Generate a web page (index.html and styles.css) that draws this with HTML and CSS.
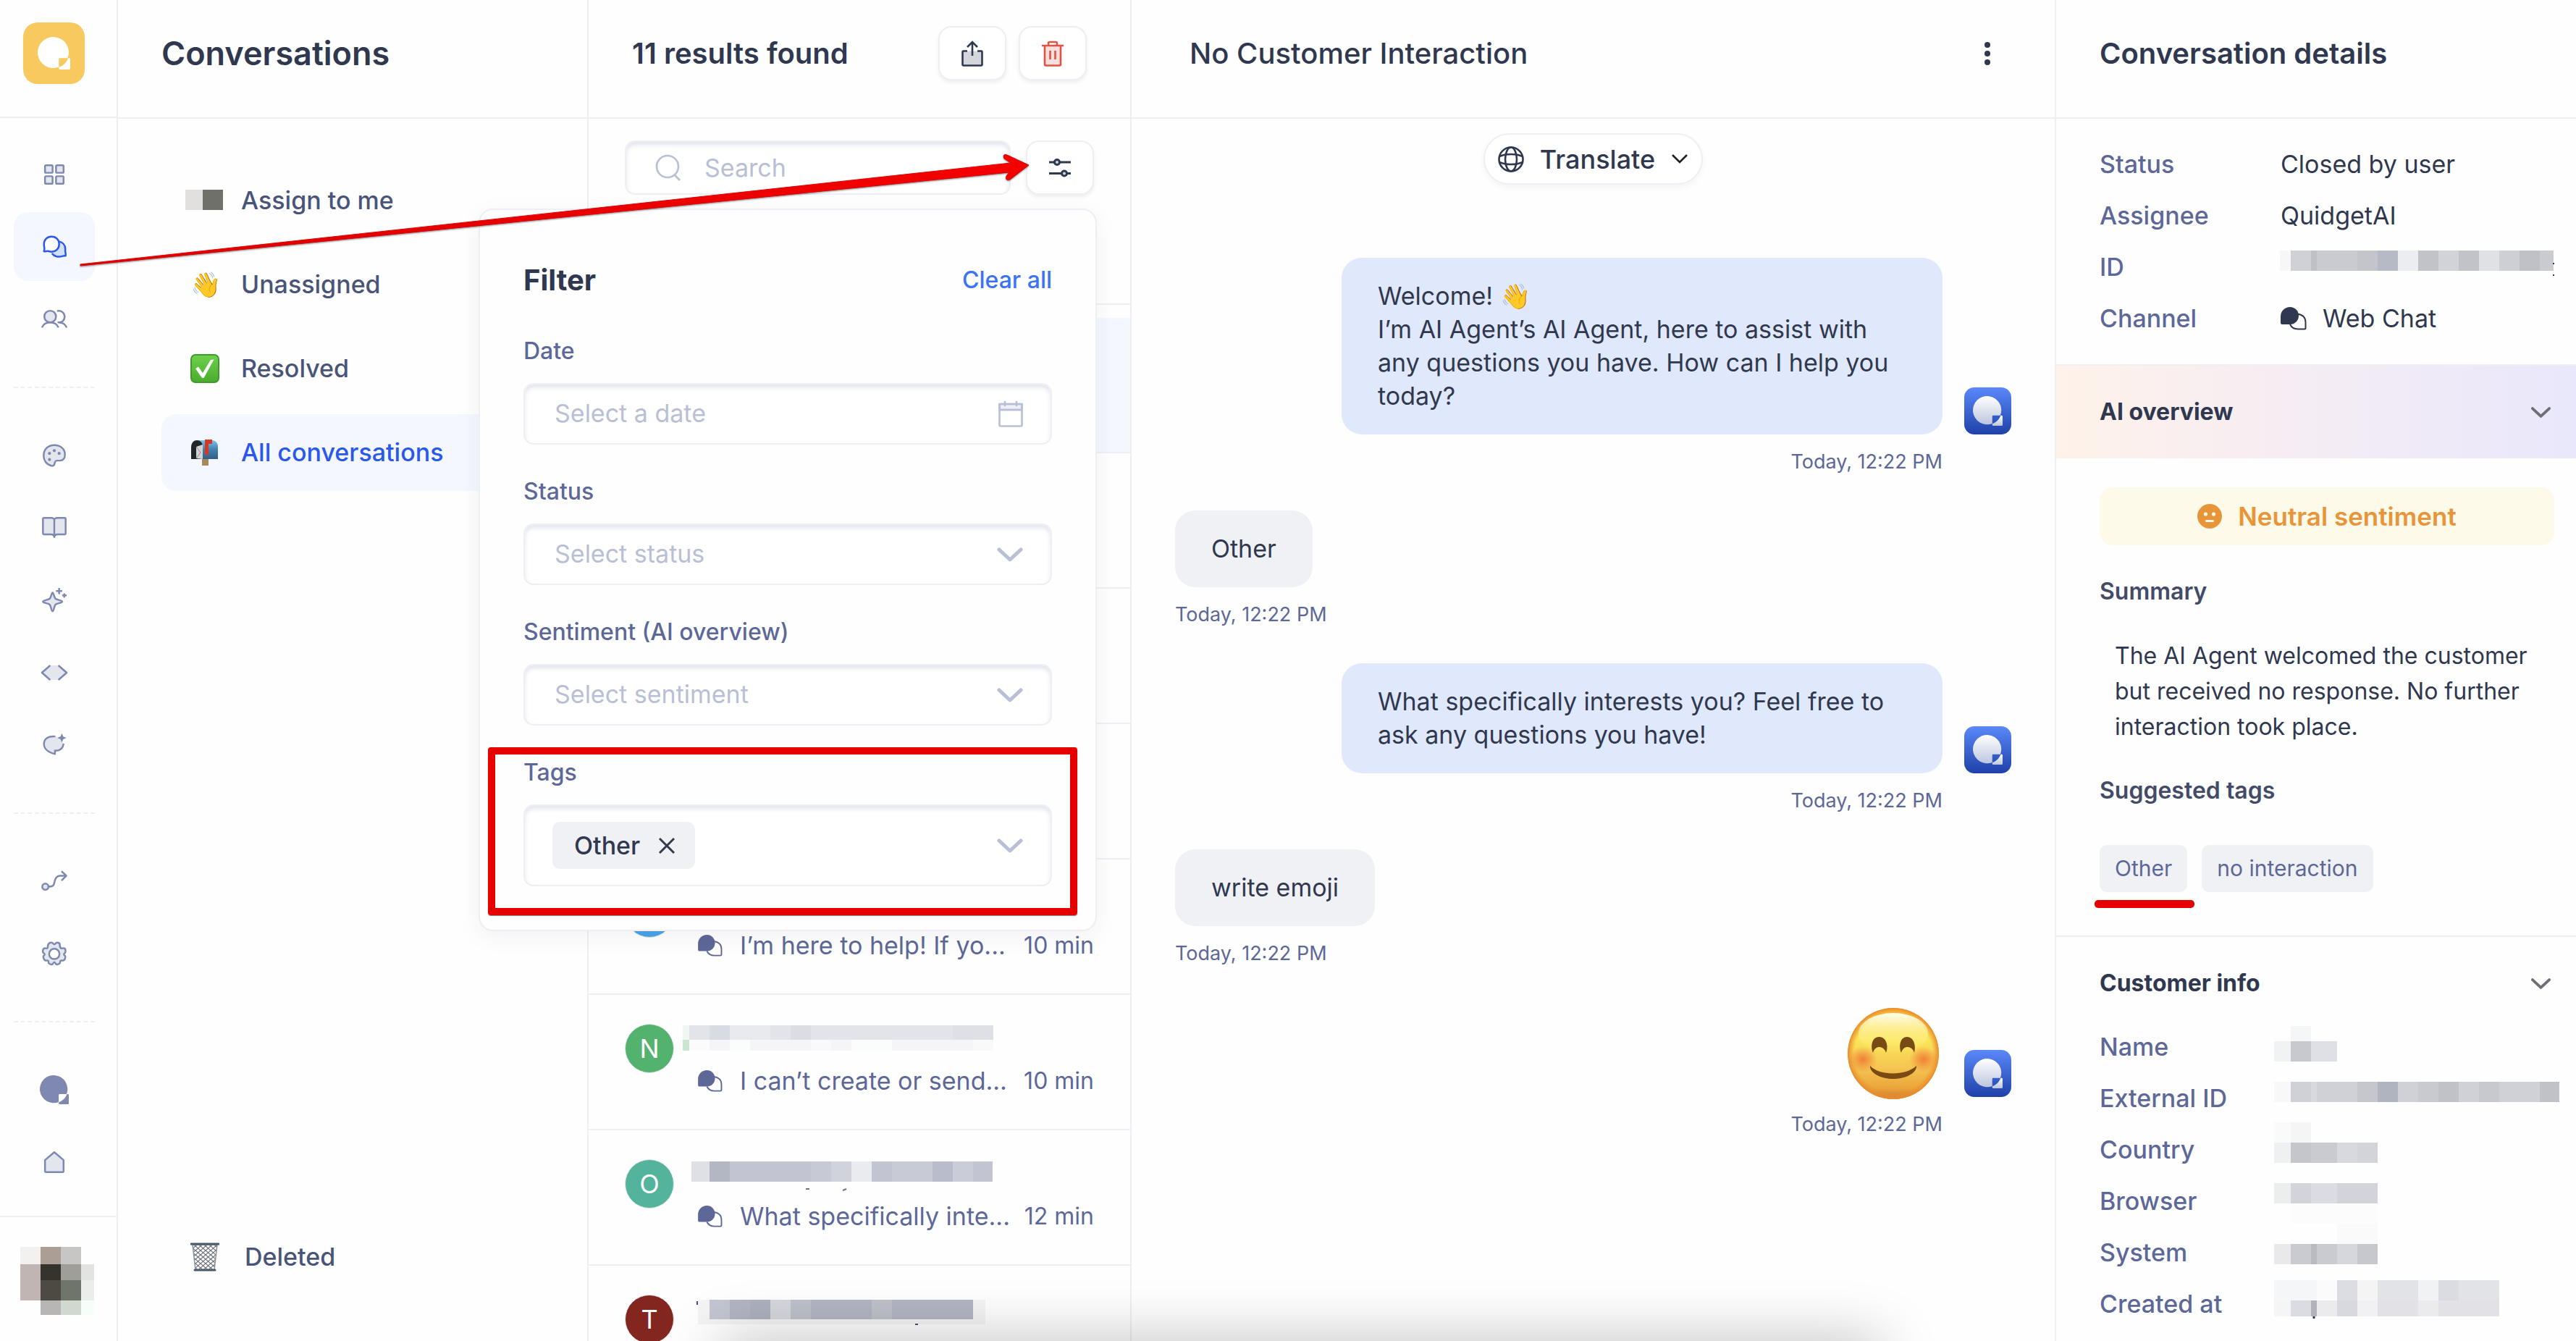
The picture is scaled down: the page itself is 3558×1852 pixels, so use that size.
FILE: index.html
```
<!DOCTYPE html>
<html lang="en">
<head>
  <meta charset="UTF-8" />
  <meta name="viewport" content="width=device-width, initial-scale=1" />
  <title>Conversations</title>
  <link rel="stylesheet" href="styles.css">
</head>
<body>
  <!-- shared icons -->
  <svg class="sprite" width="0" height="0" aria-hidden="true">
    <defs>
      <linearGradient id="markGradient" x1="0" y1="0" x2="0" y2="1">
        <stop offset="0" stop-color="#ffffff" />
        <stop offset="1" stop-color="#bcc6de" />
      </linearGradient>
    </defs>
    <symbol id="mark" viewBox="0 0 92 92">
      <path d="M85 60A44 44 0 1 0 60 85V63a3 3 0 0 1 3-3Z" />
      <path d="M89 60a3 3 0 0 1 3 3V89a3 3 0 0 1-3 3H63a3 3 0 0 1-3-3V86C72 82 82 72 86 60Z" />
    </symbol>
    <symbol id="chats" viewBox="0 0 36 32">
      <path d="M23 9.500c7 1 11.500 5 11.500 11.500V29a1.500 1.500 0 0 1-1.500 1.500H24c-5 0-9-2.500-11-6.500" fill="none" stroke="currentColor" stroke-width="2" />
      <path d="M13 0a12 12 0 1 1 0 24H2a2 2 0 0 1-2-2V13A13 13 0 0 1 13 0Z" fill="currentColor" />
    </symbol>
    <symbol id="chevron" viewBox="0 0 36 22">
      <path d="M3 4l15 14L33 4" fill="none" stroke="currentColor" stroke-width="5" stroke-linecap="round" stroke-linejoin="round" />
    </symbol>
  </svg>

  <div class="app">
    <nav class="sidebar" aria-label="Main">
      <div class="logo-box">
        <a class="logo" href="#" aria-label="Quidget"><svg width="45" height="45"><use href="#mark" /></svg></a>
      </div>

      <div class="menu">
        <a class="menu-item" href="#" aria-label="Dashboard">
          <svg class="icon" viewBox="0 0 40 40"><rect x="6.500" y="6.500" width="11" height="11" rx="1.500" /><rect x="22.500" y="6.500" width="11" height="11" rx="1.500" /><rect x="6.500" y="22.500" width="11" height="11" rx="1.500" /><rect x="22.500" y="22.500" width="11" height="11" rx="1.500" /></svg>
        </a>
        <a class="menu-item active" href="#" aria-label="Conversations">
          <svg class="icon" viewBox="0 0 40 40"><path d="M26 12c6 1 10 5 10 11 0 3-.500 4 .500 6v4c-2-.500-3 0-5 .500-6 2-12 0-15-4" /><path class="paper" d="M16 5c7 0 11 5 11 11 0 7-5 11-11 11-3 0-4 0-6-1-2 0-3 1-5 .500 1-3 1-4 .500-6C5 19 5 18 5 16 5 10 9 5 16 5Z" /></svg>
        </a>
        <a class="menu-item" href="#" aria-label="Contacts">
          <svg class="icon" viewBox="0 0 40 40"><circle cx="14" cy="16" r="8.500" /><path class="line" d="M2 32c2-5 6-7.500 12-7.500s10 2.500 12 7.500M24 8c6-1.500 11 2.500 11 8s-4 9-9 8.500c6 0 10 2.500 12 7.500" /></svg>
        </a>
        <hr>
        <a class="menu-item" href="#" aria-label="Appearance">
          <svg class="icon" viewBox="0 0 40 40"><path d="M20 5c9 0 15.500 5.500 15.500 13.500 0 6-3 9-7 9h-4c-3 0-3.500 1-4 4s-2 4-5 3.500C8.500 33 4.500 27 4.500 20.500 4.500 11 11 5 20 5Z" /><g class="dots"><circle cx="13" cy="17" r="2.200" /><circle cx="20" cy="13" r="2.200" /><circle cx="27" cy="17" r="2.200" /><circle cx="13" cy="26" r="2.200" /></g></svg>
        </a>
        <a class="menu-item" href="#" aria-label="Knowledge">
          <svg class="icon" viewBox="0 0 40 40"><path d="M3.500 7a1.500 1.500 0 0 1 1.500-1.500h11c2 0 4 1.500 4 3 0-1.500 2-3 4-3h11A1.500 1.500 0 0 1 36.500 7v21a1.500 1.500 0 0 1-1.500 1.500H25c-3 0-5 1.500-5 4 0-2.500-2-4-5-4H5A1.500 1.500 0 0 1 3.500 28Z" /><path class="line" d="M20 9v24" /></svg>
        </a>
        <a class="menu-item" href="#" aria-label="AI actions">
          <svg class="icon" viewBox="0 0 40 40"><path d="M17.500 9c1.500 0 2 6 4 8.500 2 2 10 2.500 10 4.500s-8 2-10 4.500-2 9.500-4 9.500-2-7-4-9.500-10-2.500-10-4.500 8-2.500 10-4.500 2.500-8.500 4-8.500Z" /><path class="line" d="M27 2v9M22.500 6.500h9M34.500 10v6M31.500 13h6.500" /></svg>
        </a>
        <a class="menu-item" href="#" aria-label="Install">
          <svg class="icon" viewBox="0 0 40 40"><path class="tint" d="M14 9.500h12L38 20 26 30.500H14L2 20Z" /><path class="line" d="M14 9.500L2 20l12 10.500M26 9.500L38 20 26 30.500" /></svg>
        </a>
        <a class="menu-item" href="#" aria-label="AI chat">
          <svg class="icon" viewBox="0 0 40 40"><path class="tint" d="M21 7c-10-1-16 4-16 11.500C5 26 12 31 21 33v-5c8 0 12-3 13-10L28 10Z" /><path class="line" d="M21.500 7.500C11 6.500 5 11 5 18.500 5 26 12 31 21 33v-5c7 .500 11.500-3 12.500-10" /><path class="dots" d="M31 3l2 4.500 4.500 2-4.500 2L31 16l-2-4.500-4.500-2 4.500-2Z" /></svg>
        </a>
        <hr>
        <a class="menu-item" href="#" aria-label="Flows">
          <svg class="icon" viewBox="0 0 40 40"><circle cx="7" cy="28" r="4.500" /><path class="line" d="M11.500 28c8 0 8-3 9-8s3-8 8-8h8.500M30.500 5.500l7 6.500-7 7" /></svg>
        </a>
        <a class="menu-item" href="#" aria-label="Settings">
          <svg class="icon" viewBox="0 0 40 40"><path d="M16 4c2 0 2.500 2.500 4 2.500S22 4 24 4s4 1 4 3 0 4 1.500 5 4-.500 5.500.500 1.500 4 1 5.500-2 1.500-2 3 2 1.500 2 3.500-1 5-3 5.500-3-.500-4 .500 0 3-1.500 4-3 1.500-4.500 1-1.500-3-3-3-1.500 2.500-3 3-3 0-4.500-1-.500-3-1.500-4-2.500 0-4-.500-3-3.500-3-5.500 2-2 2-3.500-2-1.500-2.500-3 0-4.500 1.500-5.500 4 .500 5-.500 0-3 1-5 2.500-3 4-3Z" /><circle class="paper" cx="20" cy="20.500" r="7.500" /></svg>
        </a>
        <hr>
        <a class="menu-item" href="#" aria-label="Quidget site">
          <svg class="mark" width="40" height="40"><use href="#mark" /></svg>
        </a>
        <a class="menu-item" href="#" aria-label="Home">
          <svg class="icon" viewBox="0 0 40 40"><path d="M20 5.500l13.500 11.500v16a1.500 1.500 0 0 1-1.500 1.500H8A1.500 1.500 0 0 1 6.500 33V17Z" /></svg>
        </a>
      </div>

      <div class="account">
        <svg class="mosaic" width="102" height="94" viewBox="0 0 102 94">
          <rect width="28" height="24" fill="#f2f1ef" /><rect x="28" width="28" height="24" fill="#ab9f95" /><rect x="56" width="28" height="24" fill="#c8c6c5" />
          <rect y="24" width="28" height="50" fill="#c0b5b2" /><rect x="28" y="24" width="28" height="22" fill="#34332d" /><rect x="56" y="24" width="28" height="22" fill="#a09e98" /><rect x="84" y="24" width="18" height="22" fill="#e3e3e2" />
          <rect x="28" y="46" width="28" height="28" fill="#4d4943" /><rect x="56" y="46" width="28" height="28" fill="#70756a" /><rect x="84" y="46" width="18" height="28" fill="#eaedea" />
          <rect x="28" y="74" width="28" height="20" fill="#b8b6b4" /><rect x="56" y="74" width="28" height="20" fill="#d1d8d0" /><rect x="84" y="74" width="18" height="20" fill="#f6fefa" />
        </svg>
      </div>
    </nav>

    <section class="folders">
      <header class="bar"><h1>Conversations</h1></header>
      <div class="folder-list">
        <a class="folder" href="#">
          <svg class="mosaic" width="40" height="40" viewBox="0 0 40 40"><rect x="-7" y="5" width="24" height="28" fill="#e2dfdf" /><rect x="17" y="5" width="28" height="28" fill="#70706b" /></svg>
          Assign to me
        </a>
        <a class="folder" href="#"><span class="emoji">👋</span>Unassigned</a>
        <a class="folder" href="#">
          <svg width="40" height="40" viewBox="0 0 40 40">
            <defs><linearGradient id="green" x1="0" y1="0" x2="0" y2="1"><stop offset="0" stop-color="#6fd24c" /><stop offset="1" stop-color="#48ab2c" /></linearGradient></defs>
            <rect x="1" y="1" width="38" height="38" rx="6" fill="url(#green)" stroke="#3f9b2c" stroke-width="2" />
            <path d="M7 20l4-2.500 6 8.500L28 8l4.500-.500L18.500 33h-2.500Z" fill="#fff" />
          </svg>
          Resolved
        </a>
        <a class="folder active" href="#">
          <svg width="40" height="40" viewBox="0 0 40 40">
            <defs><linearGradient id="mailbox" x1="0" y1="0" x2="0" y2="1"><stop offset="0" stop-color="#7cc3ea" /><stop offset=".5" stop-color="#4380ad" /><stop offset="1" stop-color="#2f5f86" /></linearGradient></defs>
            <rect x="16" y="26" width="9" height="12" fill="#a98a5c" />
            <path d="M10 3h20c5 0 8 4 8 9v17H10Z" fill="url(#mailbox)" />
            <path d="M1 29V13C1 6 5 3 9 3s8 3 8 9v17Z" fill="#22262b" />
            <path d="M8 12l9-3v20l-9-1Z" fill="#d3d3d3" />
            <path d="M8 12l6 8-6 8" fill="none" stroke="#8d8d8d" stroke-width="1" />
            <path d="M20 2h10v6h-5v13a2.500 2.500 0 0 1-5 0Z" fill="#dc3423" />
          </svg>
          All conversations
        </a>
        <a class="folder deleted" href="#">
          <svg width="40" height="42" viewBox="0 0 40 42">
            <defs><pattern id="mesh" width="7" height="6" patternUnits="userSpaceOnUse"><path d="M0 0l7 6M7 0L0 6" stroke="#6d7379" stroke-width="1.200" fill="none" /></pattern></defs>
            <path d="M3 4h34l-4 35H7Z" fill="url(#mesh)" stroke="#8a929b" stroke-width="1.500" />
            <path d="M1 3h38M6 39h28" stroke="#4b5a6b" stroke-width="3" stroke-linecap="round" />
          </svg>
          Deleted
        </a>
      </div>
    </section>

    <section class="results">
      <header class="bar">
        <h2>11 results found</h2>
        <div class="actions">
          <button class="icon-btn" type="button" aria-label="Export">
            <svg width="30" height="36" viewBox="0 0 30 36"><path d="M1.500 14.500h27V33a1.500 1.500 0 0 1-1.500 1.500H3A1.500 1.500 0 0 1 1.500 33Z" fill="#d5d6dc" /><path d="M8 14.500H2.500a1 1 0 0 0-1 1V33A1.500 1.500 0 0 0 3 34.500h24a1.500 1.500 0 0 0 1.500-1.500V15.500a1 1 0 0 0-1-1H22M15 21V3M8 9l7-7 7 7" fill="none" stroke="currentColor" stroke-width="2.600" /></svg>
          </button>
          <button class="icon-btn danger" type="button" aria-label="Delete">
            <svg width="30" height="36" viewBox="0 0 30 36"><path d="M4 7h22v26a1.500 1.500 0 0 1-1.500 1.500h-19A1.500 1.500 0 0 1 4 33Z" fill="#fadfdc" /><path d="M0 7h30M9 7V4a2 2 0 0 1 2-2h8a2 2 0 0 1 2 2v3M4 7v26a1.500 1.500 0 0 0 1.500 1.500h19A1.500 1.500 0 0 0 26 33V7M11.500 14v12M18.500 14v12" fill="none" stroke="currentColor" stroke-width="2.600" /></svg>
          </button>
        </div>
      </header>

      <div class="toolbar">
        <label class="search">
          <svg width="38" height="38" viewBox="0 0 38 38" fill="none" stroke="currentColor" stroke-width="2.600"><circle cx="17" cy="17" r="15" /><path d="M27 29l7 7" /></svg>
          <input type="search" placeholder="Search" aria-label="Search">
        </label>
        <button class="icon-btn" type="button" aria-label="Filter" aria-expanded="true">
          <svg width="30" height="26" viewBox="0 0 30 26" fill="#d5d6dc" stroke="currentColor" stroke-width="3"><path d="M0 5h30M0 20.500h30" /><circle cx="11" cy="5" r="3.500" /><circle cx="21" cy="20.500" r="3.500" /></svg>
        </button>
      </div>

      <ul class="chat-list">
        <li class="chat-row active"></li>
        <li class="chat-row"></li>
        <li class="chat-row"></li>
        <li class="chat-row"></li>
        <li class="chat-row">
          <span class="avatar blue"></span>
          <div class="chat-info">
            <div class="chat-name"></div>
            <p class="preview"><svg width="34" height="30"><use href="#chats" /></svg>I’m here to help! If yo...<time>10 min</time></p>
          </div>
        </li>
        <li class="chat-row">
          <span class="avatar green">N</span>
          <div class="chat-info">
            <svg class="chat-name mosaic" viewBox="0 0 410 56">
              <rect x="-21" y="2" width="9" height="20" fill="#eef7f2" /><rect x="-21" y="22" width="9" height="15" fill="#c8e6d2" />
              <rect x="-12" y="2" width="420" height="20" fill="#e3e4e9" /><rect x="16" y="2" width="28" height="20" fill="#d8dbe2" /><rect x="44" y="2" width="56" height="20" fill="#e9eaee" /><rect x="128" y="2" width="28" height="20" fill="#dcdde2" /><rect x="352" y="2" width="56" height="20" fill="#dfe0e5" />
              <rect x="-12" y="22" width="420" height="15" fill="#f5f5f7" /><rect x="-12" y="22" width="28" height="15" fill="#fafbfa" /><rect x="44" y="22" width="28" height="15" fill="#fbfcfc" /><rect x="156" y="22" width="28" height="15" fill="#f9f9fb" /><rect x="212" y="22" width="56" height="15" fill="#fbfdfc" /><rect x="380" y="22" width="28" height="15" fill="#f9f9fa" />
            </svg>
            <p class="preview"><svg width="34" height="30"><use href="#chats" /></svg>I can’t create or send...<time>10 min</time></p>
          </div>
        </li>
        <li class="chat-row">
          <span class="avatar teal">O</span>
          <div class="chat-info">
            <svg class="chat-name mosaic" viewBox="0 0 410 56">
              <rect x="-9" y="3" width="416" height="28" fill="#c2c5d1" /><rect x="-9" y="3" width="25" height="28" fill="#dfe0e5" /><rect x="16" y="3" width="28" height="28" fill="#b3b7c4" /><rect x="156" y="3" width="28" height="28" fill="#c7cad4" /><rect x="184" y="3" width="28" height="28" fill="#d1d3dc" /><rect x="212" y="3" width="28" height="28" fill="#eaebef" /><rect x="268" y="3" width="56" height="28" fill="#c8cad6" /><rect x="324" y="3" width="28" height="28" fill="#b9bcca" /><rect x="352" y="3" width="28" height="28" fill="#cacdd7" />
              <path d="M149 41h5M205 41l-5 2" stroke="#6b7196" stroke-width="2" />
            </svg>
            <p class="preview"><svg width="34" height="30"><use href="#chats" /></svg>What specifically inte...<time>12 min</time></p>
          </div>
        </li>
        <li class="chat-row">
          <span class="avatar red">T</span>
          <div class="chat-info">
            <svg class="chat-name mosaic" viewBox="0 0 410 56">
              <rect x="0" y="7" width="397" height="34" fill="#f4f4f5" /><rect x="16" y="7" width="364" height="27" fill="#b2b5c2" /><rect x="16" y="7" width="28" height="27" fill="#c3c6d0" /><rect x="72" y="7" width="28" height="27" fill="#adb1be" /><rect x="100" y="7" width="28" height="27" fill="#d6d7dd" /><rect x="128" y="7" width="28" height="27" fill="#bec0ca" /><rect x="240" y="7" width="28" height="27" fill="#bfc1c9" />
              <path d="M-1 9v5M300 41h4" stroke="#4b5174" stroke-width="2" />
            </svg>
          </div>
        </li>
      </ul>

      <form class="filter">
        <div class="filter-head">
          <h3>Filter</h3>
          <button class="clear" type="reset">Clear all</button>
        </div>
        <div class="field">
          <label for="date">Date</label>
          <div class="control">
            <input id="date" type="text" placeholder="Select a date">
            <svg width="34" height="36" viewBox="0 0 34 36" fill="none" stroke="currentColor" stroke-width="2.600"><path d="M1.500 4h31v8h-31Z" fill="#eef0f5" /><path d="M1.500 5.500a1.500 1.500 0 0 1 1.500-1.500h28a1.500 1.500 0 0 1 1.500 1.500V33a1.500 1.500 0 0 1-1.500 1.500H3A1.500 1.500 0 0 1 1.500 33ZM1.500 12h31M9 0v7M25 0v7" /></svg>
          </div>
        </div>
        <div class="field">
          <label for="status">Status</label>
          <div class="control">
            <select id="status"><option>Select status</option></select>
            <svg width="36" height="22"><use href="#chevron" /></svg>
          </div>
        </div>
        <div class="field">
          <label for="sentiment">Sentiment (AI overview)</label>
          <div class="control">
            <select id="sentiment"><option>Select sentiment</option></select>
            <svg width="36" height="22"><use href="#chevron" /></svg>
          </div>
        </div>
        <div class="field">
          <span class="label" id="tagsLabel">Tags</span>
          <div class="control tags" role="group" aria-labelledby="tagsLabel">
            <button class="tag" type="button">Other <svg width="26" height="26" viewBox="0 0 26 26"><path d="M3 3l20 20M23 3L3 23" stroke="currentColor" stroke-width="3" /></svg></button>
            <svg width="36" height="22"><use href="#chevron" /></svg>
          </div>
        </div>
        <div class="highlight"></div>
      </form>
    </section>

    <main class="chat">
      <header class="bar">
        <h2>No Customer Interaction</h2>
        <button class="dots-btn" type="button" aria-label="More">
          <svg width="10" height="34" viewBox="0 0 10 34"><circle cx="5" cy="5" r="4" /><circle cx="5" cy="17" r="4" /><circle cx="5" cy="29" r="4" /></svg>
        </button>
      </header>
      <button class="translate" type="button">
        <svg width="36" height="36" viewBox="0 0 36 36" fill="none" stroke="currentColor" stroke-width="2.600"><circle cx="18" cy="18" r="16.500" /><ellipse cx="18" cy="18" rx="8" ry="16.500" /><path d="M2 14c9-4 23-4 32 0M2 22c9 4 23 4 32 0" /></svg>
        Translate
        <svg class="small-chevron" width="24" height="16" viewBox="0 0 24 16"><path d="M2 2l10 10L22 2" fill="none" stroke="#1e2026" stroke-width="2.600" /></svg>
      </button>

      <div class="messages">
        <div class="message bot">
          <div class="bubble">Welcome! 👋<br>I’m AI Agent’s AI Agent, here to assist with any questions you have. How can I help you today?</div>
          <span class="bot-icon"><svg width="41" height="41"><use href="#mark" /></svg></span>
          <time>Today, 12:22 PM</time>
        </div>
        <div class="message">
          <div class="bubble">Other</div>
          <time>Today, 12:22 PM</time>
        </div>
        <div class="message bot">
          <div class="bubble">What specifically interests you? Feel free to ask any questions you have!</div>
          <span class="bot-icon"><svg width="41" height="41"><use href="#mark" /></svg></span>
          <time>Today, 12:22 PM</time>
        </div>
        <div class="message">
          <div class="bubble">write emoji</div>
          <time>Today, 12:22 PM</time>
        </div>
        <div class="message bot">
          <svg class="smile" width="132" height="131" viewBox="0 0 132 131">
            <defs>
              <linearGradient id="face" x1="0" y1="0" x2="0" y2="1"><stop offset="0" stop-color="#fdc63c" /><stop offset=".35" stop-color="#fbe65c" /><stop offset=".65" stop-color="#f5c651" /><stop offset=".88" stop-color="#eba53a" /><stop offset="1" stop-color="#c9742a" /></linearGradient>
              <radialGradient id="rim"><stop offset=".85" stop-color="#ee962f" stop-opacity="0" /><stop offset="1" stop-color="#e98a2c" /></radialGradient>
              <linearGradient id="shine" x1="0" y1="0" x2="0" y2="1"><stop offset="0" stop-color="#fffef0" /><stop offset="1" stop-color="#fdf36b" stop-opacity="0" /></linearGradient>
              <radialGradient id="blush"><stop offset="0" stop-color="#f08038" /><stop offset="1" stop-color="#f08038" stop-opacity="0" /></radialGradient>
            </defs>
            <circle cx="64" cy="71" r="63" fill="url(#face)" />
            <circle cx="64" cy="71" r="63" fill="url(#rim)" />
            <ellipse cx="64" cy="43" rx="48" ry="28" fill="url(#shine)" />
            <ellipse cx="22" cy="79" rx="20" ry="18" fill="url(#blush)" />
            <ellipse cx="106" cy="79" rx="20" ry="18" fill="url(#blush)" />
            <path d="M36 70c-4-10-1-22 8.500-22S58 60 54 70c-3-10-15-11-18 0ZM75 70c-4-10-1-22 8-22s13 12 10 22c-3-10-15-11-18 0Z" fill="#7a4a14" />
            <path d="M32 88c13 14 49 14 64 0 1 8-12 18-32 18S31 96 32 88Z" fill="#7a4a14" />
          </svg>
          <span class="bot-icon"><svg width="41" height="41"><use href="#mark" /></svg></span>
          <time>Today, 12:22 PM</time>
        </div>
      </div>
    </main>

    <aside class="details">
      <header class="bar"><h2>Conversation details</h2></header>
      <dl class="info">
        <dt>Status</dt><dd>Closed by user</dd>
        <dt>Assignee</dt><dd>QuidgetAI</dd>
        <dt>ID</dt>
        <dd>
          <svg class="mosaic" width="400" height="71" viewBox="0 0 400 71"><rect x="-1" y="13" width="15" height="28" fill="#f7f7f8" /><rect x="14" y="13" width="363" height="28" fill="#cacbd1" /><rect x="14" y="13" width="28" height="28" fill="#d0d1d7" /><rect x="42" y="13" width="8" height="28" fill="#bfc0c6" /><rect x="106" y="13" width="28" height="28" fill="#c4c5cb" /><rect x="134" y="13" width="28" height="28" fill="#b6bac4" /><rect x="162" y="13" width="28" height="28" fill="#ecedf0" /><rect x="190" y="13" width="28" height="28" fill="#c2c3c8" /><rect x="218" y="13" width="28" height="28" fill="#d2d3d8" /><rect x="246" y="13" width="28" height="28" fill="#c2c3c8" /><rect x="274" y="13" width="28" height="28" fill="#e0e1e5" /><rect x="302" y="13" width="28" height="28" fill="#cecfd4" /><rect x="330" y="13" width="28" height="28" fill="#c0c1c7" /><path d="M377 30v2M377 46v2" stroke="#30384f" stroke-width="2" /></svg>
        </dd>
        <dt>Channel</dt><dd><svg width="36" height="32"><use href="#chats" /></svg>Web Chat</dd>
      </dl>

      <button class="section-head overview" type="button">AI overview<svg width="29" height="17"><use href="#chevron" /></svg></button>
      <div class="overview-body">
        <div class="sentiment">
          <svg width="34" height="34" viewBox="0 0 34 34"><circle cx="17" cy="17" r="17" fill="#e8953a" /><g fill="#fefaea"><circle cx="11.500" cy="14" r="2.600" /><circle cx="22.500" cy="14" r="2.600" /><rect x="11" y="22" width="12" height="3" rx="1.500" /></g></svg>
          Neutral sentiment
        </div>
        <h3>Summary</h3>
        <p>The AI Agent welcomed the customer but received no response. No further interaction took place.</p>
        <h3>Suggested tags</h3>
        <div class="chips">
          <span class="chip marked">Other</span>
          <span class="chip">no interaction</span>
        </div>
      </div>

      <button class="section-head customer" type="button">Customer info<svg width="29" height="17"><use href="#chevron" /></svg></button>
      <dl class="info customer-info">
        <dt>Name</dt>
        <dd><svg class="mosaic" width="400" height="71" viewBox="0 0 400 71"><rect x="14" y="7" width="28" height="21" fill="#f5f6f8" /><rect x="-9" y="28" width="23" height="28" fill="#f1f2f4" /><rect x="14" y="28" width="28" height="28" fill="#c8c9cf" /><rect x="42" y="28" width="36" height="28" fill="#dfe0e5" /></svg></dd>
        <dt>External ID</dt>
        <dd><svg class="mosaic" width="400" height="71" viewBox="0 0 400 71"><rect x="-9" y="13" width="23" height="28" fill="#f8f8f9" /><rect x="14" y="13" width="371" height="28" fill="#d0d1d7" /><rect x="42" y="13" width="8" height="28" fill="#d8d9de" /><rect x="106" y="13" width="28" height="28" fill="#c6c7cd" /><rect x="134" y="13" width="28" height="28" fill="#b0b4bf" /><rect x="190" y="13" width="28" height="28" fill="#c9cad0" /><rect x="218" y="13" width="28" height="28" fill="#c1c2c8" /><rect x="274" y="13" width="28" height="28" fill="#c8c9cf" /><rect x="358" y="13" width="27" height="28" fill="#c1c2c9" /></svg></dd>
        <dt>Country</dt>
        <dd><svg class="mosaic" width="400" height="71" viewBox="0 0 400 71"><rect x="-9" y="-2" width="23" height="28" fill="#fafafb" /><rect x="14" y="-2" width="28" height="28" fill="#f5f5f6" /><rect x="-9" y="26" width="23" height="28" fill="#eff0f2" /><rect x="14" y="26" width="28" height="28" fill="#c5c6cc" /><rect x="42" y="26" width="36" height="28" fill="#cacbd0" /><rect x="78" y="26" width="28" height="28" fill="#d8d9de" /><rect x="106" y="26" width="28" height="28" fill="#d3d4da" /></svg></dd>
        <dt>Browser</dt>
        <dd><svg class="mosaic" width="400" height="71" viewBox="0 0 400 71"><rect x="-9" y="11" width="23" height="28" fill="#ecedef" /><rect x="14" y="11" width="120" height="28" fill="#d3d4da" /><rect x="42" y="11" width="36" height="28" fill="#dbdce1" /><rect x="14" y="39" width="120" height="28" fill="#fcfcfd" /></svg></dd>
        <dt>System</dt>
        <dd><svg class="mosaic" width="400" height="71" viewBox="0 0 400 71"><rect x="78" y="-4" width="56" height="28" fill="#fafafa" /><rect x="-9" y="24" width="23" height="28" fill="#e9e9eb" /><rect x="14" y="24" width="64" height="28" fill="#cacbd1" /><rect x="42" y="24" width="8" height="28" fill="#b9bbc3" /><rect x="78" y="24" width="28" height="28" fill="#d6d7dc" /><rect x="106" y="24" width="28" height="28" fill="#c7c8ce" /></svg></dd>
        <dt>Created at</dt>
        <dd><svg class="mosaic" width="400" height="71" viewBox="0 0 400 71"><rect x="-9" y="3" width="311" height="28" fill="#e2e3e6" /><rect x="-9" y="3" width="87" height="28" fill="#f5f6f7" /><rect x="50" y="3" width="28" height="28" fill="#fbfbfb" /><rect x="78" y="3" width="28" height="28" fill="#dcdde2" /><rect x="106" y="3" width="28" height="28" fill="#f4f4f5" /><rect x="190" y="3" width="28" height="28" fill="#f1f2f4" /><rect x="218" y="3" width="28" height="28" fill="#dbdce1" /><rect x="-9" y="31" width="311" height="22" fill="#e2e2e6" /><rect x="-9" y="31" width="23" height="22" fill="#f5f5f5" /><rect x="14" y="31" width="28" height="22" fill="#dbdce1" /><rect x="42" y="31" width="8" height="22" fill="#b0b3bc" /><rect x="50" y="31" width="28" height="22" fill="#ebebed" /><rect x="78" y="31" width="28" height="22" fill="#d8d9df" /><rect x="106" y="31" width="28" height="22" fill="#f1f1f3" /><rect x="190" y="31" width="28" height="22" fill="#ebebed" /><path d="M46 53v3" stroke="#30384f" stroke-width="3" /></svg></dd>
      </dl>
    </aside>
  </div>

  <!-- pointer from the menu to the filter button -->
  <svg class="arrow" width="1440" height="380" viewBox="0 0 1440 380" aria-hidden="true">
    <defs><linearGradient id="arrowFill" x1="0" y1="0" x2=".02" y2="1"><stop offset="0" stop-color="#f80000" /><stop offset="1" stop-color="#dc0000" /></linearGradient></defs>
    <path d="M111 365L1396 225L1387 219Q1384 212 1391 214L1421 228L1395 248Q1388 250 1390 243L1394 238L111 367Z" fill="url(#arrowFill)" stroke="#e00000" stroke-width="1" stroke-linejoin="round" />
  </svg>
  <div class="dock-shadow"></div>
</body>
</html>
```
FILE: styles.css
```
* {
  box-sizing: border-box;
}

body {
  margin: 0;
  font-family: Inter, "Liberation Sans", sans-serif;
  font-size: 34px;
  line-height: 46px;
  color: #30384f;
  background: #fefefe;
  overflow: hidden;
}

h1, h2, h3, p, dl, dd, ul {
  margin: 0;
  padding: 0;
}

a {
  color: inherit;
  text-decoration: none;
}

button, input, select {
  font: inherit;
  color: inherit;
  border: none;
  background: none;
  padding: 0;
}

button {
  cursor: pointer;
}

svg {
  flex-shrink: 0;
}

.sprite {
  position: absolute;
}

.mosaic {
  overflow: visible;
}

.app {
  display: grid;
  grid-template-columns: 163px 650px 750px 1fr 720px;
  grid-template-rows: minmax(0, 1fr);
  height: 100vh;
}

.bar {
  display: flex;
  align-items: center;
  justify-content: space-between;
  flex-shrink: 0;
  height: 164px;
  padding: 0 60px 15px;
  border-bottom: 2px solid #eeeff4;
}

h1 {
  font-size: 45px;
  font-weight: 600;
}

h2 {
  font-size: 40px;
  font-weight: 600;
}

/* sidebar */
.sidebar {
  display: flex;
  flex-direction: column;
  border-right: 2px solid #eeeff4;
}

.logo-box {
  padding: 31px 32px 45px;
  border-bottom: 2px solid #eeeff4;
}

.logo {
  display: flex;
  align-items: center;
  justify-content: center;
  width: 85px;
  height: 85px;
  border-radius: 20px;
  background: #f7c95f;
  fill: #fff;
}

.menu {
  flex: 1;
  display: flex;
  flex-direction: column;
  gap: 5px;
  min-height: 0;
  padding: 30px 30px 0 19px;
}

.menu-item {
  display: flex;
  align-items: center;
  justify-content: center;
  flex-shrink: 0;
  height: 95px;
  border-radius: 20px;
  color: #7e88b0;
}

.menu hr {
  width: 100%;
  margin: 41px 0 40px;
  border: none;
  border-top: 2px dashed #eeeff4;
}

.menu-item.active {
  background: #f4f7fe;
  color: #2958eb;
}

.icon {
  width: 38px;
  height: 38px;
  fill: #e3e6ed;
  stroke: currentColor;
  stroke-width: 2.6;
  stroke-linejoin: round;
}

.active .icon {
  fill: #d3dffb;
}

.icon .line {
  fill: none;
}

.icon .paper, .active .icon .paper {
  fill: #fff;
}

.icon .tint {
  stroke: none;
}

.icon .dots {
  fill: currentColor;
  stroke: none;
}

.mark {
  fill: currentColor;
}

.account {
  display: flex;
  padding: 41px 28px 36px;
  border-top: 2px solid #eeeff4;
}

/* folders */
.folders, .results {
  display: flex;
  flex-direction: column;
  min-width: 0;
  border-right: 2px solid #eeeff4;
}

.folder-list {
  flex: 1;
  display: flex;
  flex-direction: column;
  gap: 10px;
  padding: 60px 60px 63px;
}

.folder {
  display: flex;
  align-items: center;
  gap: 30px;
  height: 106px;
  padding: 0 40px;
  border-radius: 20px;
  font-weight: 500;
  color: #4a5478;
}

.folder.active {
  background: #f4f7fe;
  color: #2958eb;
}

.folder .emoji {
  width: 40px;
  font-size: 34px;
}

.deleted {
  margin-top: auto;
  gap: 35px;
}

/* results */
.results {
  position: relative;
}

.actions {
  display: flex;
  gap: 17px;
}

.icon-btn {
  display: flex;
  align-items: center;
  justify-content: center;
  width: 94px;
  height: 75px;
  border: 2px solid #eeeff4;
  border-radius: 18px;
  background: #fff;
  box-shadow: 0 3px 5px rgba(48, 56, 79, 0.08);
}

.icon-btn.danger {
  color: #e05244;
}

.toolbar {
  display: flex;
  align-items: flex-start;
  gap: 21px;
  padding: 30px 50px 150px;
  border-bottom: 2px solid #eeeff4;
}

.search {
  flex: 1;
  display: flex;
  align-items: center;
  gap: 30px;
  height: 75px;
  min-width: 0;
  padding: 0 40px;
  color: #b9bfd5;
}

.search, .control {
  border: 2px solid #eeeff4;
  border-radius: 14px;
  background: #fff;
  box-shadow: inset 0 4px 6px rgba(93, 104, 152, 0.18);
}

.search input {
  width: 100%;
  min-width: 0;
}

input::placeholder {
  color: #b9bfd5;
  opacity: 1;
}

.chat-list {
  flex: 1;
  min-height: 0;
  overflow: hidden;
  padding-top: 18px;
  list-style: none;
}

.chat-row {
  display: flex;
  align-items: flex-start;
  gap: 33px;
  height: 187px;
  padding: 40px 50px 0;
  border-bottom: 2px solid #eeeff4;
}

.chat-row.active {
  background: #f4f7fe;
}

.avatar {
  flex-shrink: 0;
  width: 68px;
  height: 68px;
  border: 1px solid #e4e6ee;
  border-radius: 50%;
  font-size: 36px;
  line-height: 66px;
  text-align: center;
  color: #fff;
}

.blue { background: #49a2e8; }
.green { background: #52b26e; }
.teal { background: #53b39b; }
.red { background: #82261f; }

.chat-info {
  flex: 1;
  min-width: 0;
}

.chat-name {
  display: block;
  width: 410px;
  height: 56px;
}

.preview {
  display: flex;
  align-items: center;
  height: 46px;
  white-space: nowrap;
  color: #5d6898;
}

.preview svg {
  margin-right: 24px;
}

.preview time {
  margin-left: auto;
  font-size: 32px;
}

/* filter panel */
.filter {
  position: absolute;
  top: 288px;
  right: 46px;
  display: flex;
  flex-direction: column;
  gap: 38px;
  width: 854px;
  padding: 74px 60px 60px;
  border: 2px solid #eeeff4;
  border-radius: 20px;
  background: #fefefe;
  box-shadow: 0 8px 32px rgba(48, 56, 79, 0.06);
}

.filter-head {
  display: flex;
  align-items: center;
  justify-content: space-between;
  padding-bottom: 10px;
}

.filter h3 {
  font-size: 40px;
  font-weight: 700;
}

.clear {
  font-size: 32px;
  font-weight: 500;
  color: #3b73f6;
}

.field {
  display: flex;
  flex-direction: column;
  gap: 17px;
}

.field label, .field .label {
  font-size: 32px;
  font-weight: 500;
  line-height: 54px;
  color: #5d6898;
}

.control {
  position: relative;
  height: 85px;
  color: #b9bfd5;
}

.control input, .control select {
  width: 100%;
  height: 100%;
  padding: 0 100px 2px 41px;
  appearance: none;
  outline: none;
}

.control > svg {
  position: absolute;
  top: 0;
  bottom: 0;
  right: 38px;
  margin: auto 0;
  pointer-events: none;
}

.control.tags {
  display: flex;
  align-items: center;
  height: 113px;
  padding-left: 38px;
}

.tag {
  display: flex;
  align-items: center;
  gap: 24px;
  height: 65px;
  padding: 0 26px 0 30px;
  border-radius: 10px;
  font-weight: 500;
  color: #30384f;
  background: #f0f1f5;
}

.highlight {
  position: absolute;
  top: 742px;
  bottom: 20px;
  left: 11px;
  right: 25px;
  border: 10px solid #e60000;
  border-radius: 4px;
  box-shadow: 0 1px 1px rgba(0, 0, 0, 0.5);
  pointer-events: none;
}

/* chat */
.chat {
  display: flex;
  flex-direction: column;
  min-width: 0;
}

.chat .bar {
  padding: 0 84px 15px 80px;
}

.chat h2 {
  font-weight: 500;
}

.dots-btn {
  display: flex;
  padding: 4px;
  fill: #30384f;
}

.translate {
  display: flex;
  align-items: center;
  align-self: center;
  flex-shrink: 0;
  gap: 22px;
  height: 71px;
  margin-top: 20px;
  padding: 0 18px;
  border: 2px solid #eeeff4;
  border-radius: 36px;
  background: #fff;
  box-shadow: 0 4px 8px rgba(48, 56, 79, 0.05);
  font-size: 36px;
  font-weight: 500;
}

.messages {
  display: flex;
  flex-direction: column;
  align-items: flex-start;
  gap: 44px;
  padding: 101px 60px 0;
}

.message {
  display: grid;
  row-gap: 15px;
}

.message.bot {
  align-self: flex-end;
  grid-template-columns: auto 65px;
  column-gap: 30px;
  justify-items: end;
  align-items: end;
}

.bubble {
  max-width: 830px;
  padding: 30px 50px;
  border-radius: 28px;
  background: #f0f1f5;
  justify-self: start;
}

.bot .bubble {
  background: #e0e8fc;
}

.bot-icon {
  display: flex;
  align-items: center;
  justify-content: center;
  width: 65px;
  height: 65px;
  border-radius: 14px;
  background: linear-gradient(#5b88fa, #1f41a8);
  fill: url(#markGradient);
}

.smile {
  overflow: visible;
}

.message time {
  font-size: 27px;
  color: #5d6898;
}

/* details */
.details {
  min-width: 0;
  overflow: hidden;
  border-left: 2px solid #eeeff4;
}

.info {
  display: grid;
  grid-template-columns: 250px 1fr;
  padding: 27px 0 28px 60px;
  line-height: 71px;
}

.info dt {
  font-weight: 500;
  color: #5d6898;
}

.info dd {
  display: flex;
  align-items: center;
  gap: 22px;
  height: 71px;
}

.section-head {
  display: flex;
  align-items: center;
  justify-content: space-between;
  width: 100%;
  padding: 44px 34px 44px 60px;
  border-top: 2px solid #eeeff4;
  font-size: 32px;
  font-weight: 700;
  line-height: 40px;
}

.section-head svg {
  color: #6e6f76;
}

.overview {
  background: linear-gradient(90deg, #fef2e9, #f9efef 25%, #f3ecf5 55%, #e9e7fb);
}

.overview-body {
  padding: 40px 30px 60px 60px;
}

.sentiment {
  display: flex;
  align-items: center;
  justify-content: center;
  gap: 22px;
  height: 80px;
  border-radius: 18px;
  background: #fefaea;
  font-size: 35px;
  font-weight: 600;
  color: #e8953a;
}

.overview-body h3 {
  margin-top: 44px;
  font-size: 32px;
  font-weight: 600;
  line-height: 40px;
  color: #434b68;
}

.overview-body p {
  margin-top: 44px;
  padding-left: 21px;
  font-size: 32px;
  line-height: 49px;
}

.chips {
  display: flex;
  gap: 20px;
  margin-top: 55px;
}

.chip {
  position: relative;
  height: 65px;
  padding: 0 21px;
  border-radius: 10px;
  background: #f0f1f5;
  font-size: 30px;
  line-height: 65px;
  color: #5d6898;
}

/* red underline below the chip */
.marked::after {
  content: "";
  position: absolute;
  top: 76px;
  left: -7px;
  right: -10px;
  height: 11px;
  border-radius: 5px;
  background: #e60000;
}

.customer {
  padding-bottom: 32px;
}

.customer-info {
  padding-top: 0;
}

.arrow {
  position: absolute;
  top: 0;
  left: 0;
  pointer-events: none;
  filter: drop-shadow(0 1px 1px rgba(0, 0, 0, 0.5));
}

.dock-shadow {
  position: fixed;
  left: 28%;
  right: 27%;
  bottom: -60px;
  height: 60px;
  box-shadow: 0 0 80px rgba(0, 0, 0, 0.27);
}
```
